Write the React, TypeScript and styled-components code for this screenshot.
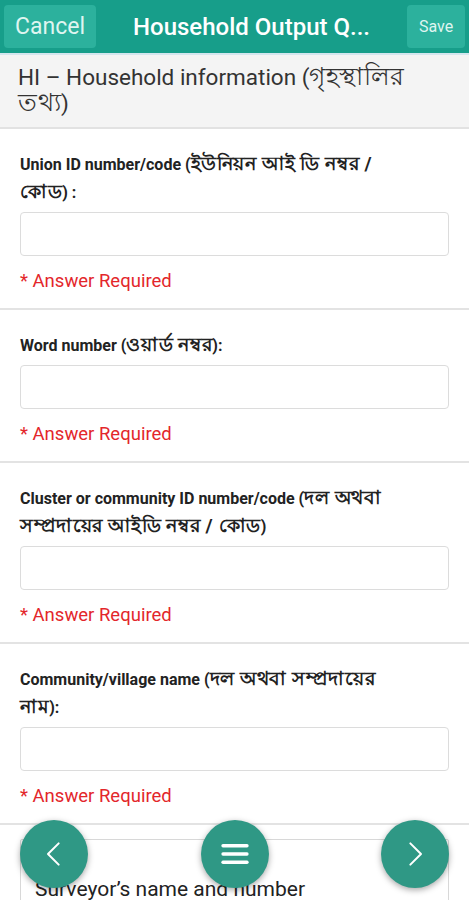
import React from 'react';
import styled, { createGlobalStyle } from 'styled-components';

const GlobalStyle = createGlobalStyle`
  html, body {
    margin: 0;
    padding: 0;
    height: 900px;
    overflow: hidden;
    background: #ffffff;
    font-family: Roboto, "Noto Sans", "Liberation Sans", sans-serif;
  }
  * { box-sizing: border-box; }
`;

const teal = '#179e8a';
const fabTeal = '#2f9885';

type Chunk = { en?: string; bn?: string };

// label lines broken as on the device; bengali chunks get their own size
const questions: Chunk[][][] = [
  [
    [{ en: 'Union ID number/code (' }, { bn: 'ইউনিয়ন আই ডি নম্বর /' }],
    [{ bn: 'কোড' }, { en: ') :' }],
  ],
  [[{ en: 'Word number (' }, { bn: 'ওয়ার্ড নম্বর' }, { en: '):' }]],
  [
    [{ en: 'Cluster or community ID number/code (' }, { bn: 'দল অথবা' }],
    [{ bn: 'সম্প্রদায়ের আইডি নম্বর / কোড' }, { en: ')' }],
  ],
  [
    [{ en: 'Community/village name (' }, { bn: 'দল অথবা সম্প্রদায়ের' }],
    [{ bn: 'নাম' }, { en: '):' }],
  ],
];

export default function App() {
  return (
    <Page>
      <GlobalStyle />
      <Header>
        <HeaderButton $size={23}>Cancel</HeaderButton>
        <Title>Household Output Q...</Title>
        <HeaderButton $size={16}>Save</HeaderButton>
      </Header>
      <SectionTitle>
        <TitleLine>HI – Household information (<TitleBn>গৃহস্থালির</TitleBn></TitleLine>
        <TitleLine><TitleBn>তথ্য</TitleBn>)</TitleLine>
      </SectionTitle>
      {questions.map((lines, qi) => (
        <Question key={qi}>
          <Label>
            {lines.map((line, li) => (
              <LabelLine key={li}>
                {line.map((c, ci) => (c.bn ? <Bn key={ci}>{c.bn}</Bn> : <span key={ci}>{c.en}</span>))}
              </LabelLine>
            ))}
          </Label>
          <Input type="text" />
          <Required>* Answer Required</Required>
        </Question>
      ))}
      <NoteCard>
        <NoteBox>
          <NoteTag>Note</NoteTag>
          <NoteText>Surveyor’s name and number</NoteText>
        </NoteBox>
      </NoteCard>
      <FabBar>
        <Fab aria-label="previous">
          <svg width="32" height="32" viewBox="0 0 24 24" fill="none" stroke="#fff" strokeWidth="1.5" strokeLinecap="round" strokeLinejoin="round">
            <polyline points="15.5,4 7.5,12 15.5,20" />
          </svg>
        </Fab>
        <Fab aria-label="menu">
          <svg width="36" height="36" viewBox="0 0 24 24" fill="none" stroke="#fff" strokeWidth="2.2" strokeLinecap="round">
            <line x1="4" y1="6.5" x2="20" y2="6.5" />
            <line x1="4" y1="12" x2="20" y2="12" />
            <line x1="4" y1="17.5" x2="20" y2="17.5" />
          </svg>
        </Fab>
        <Fab aria-label="next">
          <svg width="32" height="32" viewBox="0 0 24 24" fill="none" stroke="#fff" strokeWidth="1.5" strokeLinecap="round" strokeLinejoin="round">
            <polyline points="8.5,4 16.5,12 8.5,20" />
          </svg>
        </Fab>
      </FabBar>
    </Page>
  );
}

const Page = styled.div`
  width: 469px;
  height: 900px;
  overflow: hidden;
  background: #fff;
`;

const Header = styled.header`
  height: 55px;
  background: ${teal};
  border-bottom: 2px solid #d4e6ee;
  display: flex;
  align-items: center;
  justify-content: space-between;
  padding: 0 4px;
  gap: 8px;
`;

const HeaderButton = styled.button<{ $size: number }>`
  height: 43px;
  padding: 0 11px;
  border: none;
  border-radius: 4px;
  background: #2cb19d;
  color: #dff5f0;
  font-family: Roboto, "Liberation Sans", sans-serif;
  font-size: ${({ $size }) => $size}px;
  min-width: 58px;
  cursor: pointer;
`;

const Title = styled.h1`
  flex: 1;
  margin: 0;
  text-align: center;
  color: #fff;
  font-size: 24px;
  font-weight: 500;
  white-space: nowrap;
  overflow: hidden;
`;

const SectionTitle = styled.div`
  background: #f4f4f4;
  border-bottom: 2px solid #e2e2e2;
  padding: 9px 18px 11px;
  font-size: 22.5px;
  line-height: 26px;
  color: #333;
`;

const TitleLine = styled.div`
  height: 26px;
  white-space: nowrap;
`;

const TitleBn = styled.span`
  font-size: 25px;
  letter-spacing: 0.5px;
`;

const Question = styled.section`
  padding: 21px 20px 15px;
  border-bottom: 2px solid #e3e3e3;
`;

const Label = styled.div`
  font-size: 16px;
  line-height: 28px;
  font-weight: 700;
  color: #222;
`;

const LabelLine = styled.div`
  height: 28px;
  white-space: nowrap;
`;

const Bn = styled.span`
  font-size: 19px;
  letter-spacing: 0.6px;
`;

const Input = styled.input`
  display: block;
  width: 100%;
  height: 44px;
  margin-top: 6px;
  border: 1px solid #dcdcdc;
  border-radius: 4px;
  background: #fff;
  outline: none;
`;

const Required = styled.div`
  height: 24px;
  margin-top: 13px;
  font-size: 18.5px;
  line-height: 24px;
  color: #e3262b;
`;

const NoteCard = styled.section`
  padding: 14px 20px 0;
`;

const NoteBox = styled.div`
  border: 1px solid #d8d8d8;
  border-radius: 2px;
  padding: 14px 14px 0;
`;

const NoteTag = styled.div`
  font-size: 14px;
  color: #888;
  line-height: 20px;
`;

const NoteText = styled.div`
  font-size: 21px;
  color: #222;
  line-height: 30px;
`;

const FabBar = styled.nav`
  position: fixed;
  left: 20px;
  right: 20px;
  bottom: 12px;
  display: flex;
  justify-content: space-between;
  align-items: center;
`;

const Fab = styled.button`
  width: 68px;
  height: 68px;
  border-radius: 50%;
  border: none;
  background: ${fabTeal};
  box-shadow: 0 2px 6px rgba(0, 0, 0, 0.35);
  display: flex;
  align-items: center;
  justify-content: center;
  padding: 0;
  cursor: pointer;
`;
